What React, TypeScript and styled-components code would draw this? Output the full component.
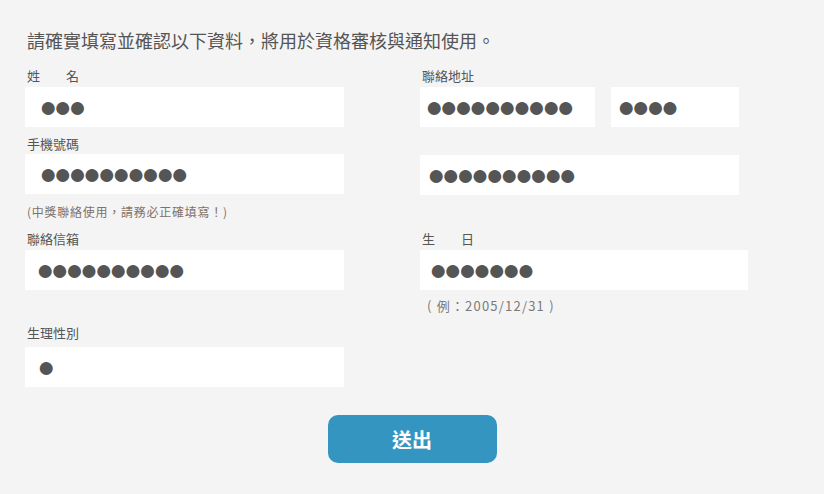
import React from "react";
import styled, { createGlobalStyle } from "styled-components";

const GlobalStyle = createGlobalStyle`
  html, body {
    margin: 0;
    padding: 0;
    background: #f4f4f4;
  }
  body {
    font-family: "Noto Sans CJK TC", "Noto Sans", sans-serif;
    color: #555;
  }
`;

const MASK = "●";

interface FieldProps {
  label: string;
  dots: number;
  indent?: number;
  width?: number;
  gap?: number;
}

const Field: React.FC<FieldProps> = ({ label, dots, indent = 14, width, gap = 2 }) => (
  <FieldWrap>
    <Label $gap={gap}>{label}</Label>
    <Box $indent={indent} $width={width}>
      {MASK.repeat(dots)}
    </Box>
  </FieldWrap>
);

export default function App() {
  return (
    <Page>
      <GlobalStyle />
      <Intro>請確實填寫並確認以下資料，將用於資格審核與通知使用。</Intro>
      <FormGrid>
        <Column>
          <Field label="姓　　名" dots={3} />
          <Spacer />
          <Field label="手機號碼" dots={10} gap={1} />
          <Note>(中獎聯絡使用，請務必正確填寫！)</Note>
        </Column>
        <Column>
          <Label>聯絡地址</Label>
          <BoxRow>
            <Box $width={175} $indent={5}>
              {MASK.repeat(10)}
            </Box>
            <Box $width={128} $indent={6}>
              {MASK.repeat(4)}
            </Box>
          </BoxRow>
          <Box $width={319} $indent={7} $top={28}>
            {MASK.repeat(10)}
          </Box>
        </Column>
        <Column>
          <Field label="聯絡信箱" dots={10} indent={11} />
        </Column>
        <Column>
          <Field label="生　　日" dots={7} indent={9} width={328} />
          <Hint>( 例：2005/12/31 )</Hint>
        </Column>
        <Column>
          <Field label="生理性別" dots={1} indent={12} gap={5} />
        </Column>
      </FormGrid>
      <Actions>
        <Submit type="button">送出</Submit>
      </Actions>
    </Page>
  );
}

const Page = styled.div`
  width: 824px;
  min-height: 494px;
  padding-top: 28px;
  box-sizing: border-box;
`;

const Intro = styled.p`
  margin: 0 0 15px 27px;
  font-size: 18px;
  line-height: 24px;
  color: #555;
`;

const FormGrid = styled.div`
  display: grid;
  grid-template-columns: 319px 328px;
  column-gap: 76px;
  row-gap: 9px;
  padding-left: 25px;
`;

const Column = styled.div`
  display: flex;
  flex-direction: column;
  align-items: flex-start;
`;

const FieldWrap = styled.div`
  display: flex;
  flex-direction: column;
  width: 100%;
`;

const Spacer = styled.div`
  height: 8px;
`;

const Label = styled.div<{ $gap?: number }>`
  margin: 0 0 ${(p) => p.$gap ?? 2}px 2px;
  font-size: 13px;
  line-height: 18px;
  color: #555;
  white-space: pre;
`;

const BoxRow = styled.div`
  display: flex;
  gap: 16px;
`;

const Box = styled.div<{ $width?: number; $indent: number; $top?: number }>`
  width: ${(p) => (p.$width ? `${p.$width}px` : "319px")};
  height: 40px;
  margin-top: ${(p) => p.$top ?? 0}px;
  padding-left: ${(p) => p.$indent}px;
  box-sizing: border-box;
  background: #fff;
  display: flex;
  align-items: center;
  font-family: "Liberation Sans", Arial, sans-serif;
  font-size: 30px;
  letter-spacing: -3.5px;
  line-height: 1;
  color: #555;
  overflow: hidden;
  white-space: nowrap;
`;

const Note = styled.div`
  margin: 9px 0 0 2px;
  font-size: 12px;
  line-height: 18px;
  letter-spacing: 0.75px;
  color: #7f7268;
`;

const Hint = styled.div`
  margin: 7px 0 0 7px;
  font-size: 13px;
  line-height: 18px;
  letter-spacing: 1.2px;
  color: #7a7a7a;
`;

const Actions = styled.div`
  display: flex;
  justify-content: center;
  margin-top: 28px;
`;

const Submit = styled.button`
  width: 169px;
  height: 48px;
  border: none;
  border-radius: 10px;
  background: #3395c0;
  color: #fff;
  font-family: "Noto Sans CJK TC", sans-serif;
  font-size: 20px;
  font-weight: 700;
  cursor: pointer;
`;
